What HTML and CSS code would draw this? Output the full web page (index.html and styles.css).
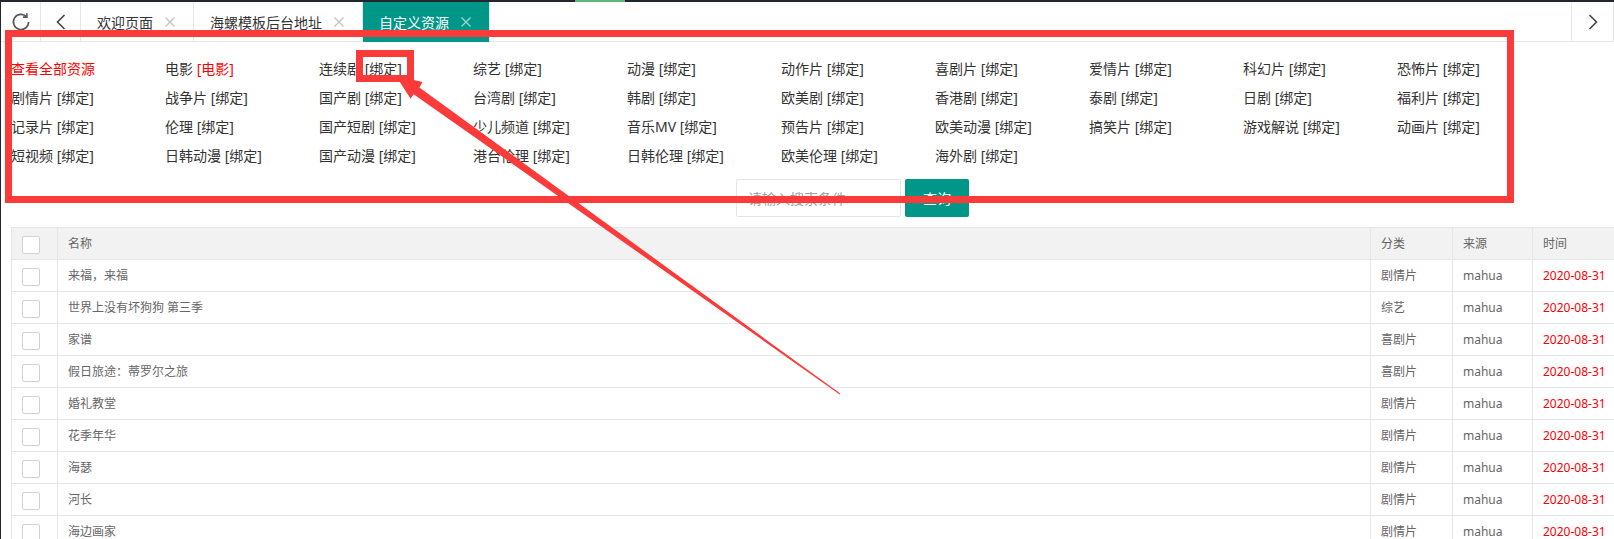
FILE: index.html
```html
<!DOCTYPE html>
<html lang="zh-CN">
<head>
<meta charset="utf-8">
<title>自定义资源</title>
<link rel="stylesheet" href="styles.css">
</head>
<body>
<div class="page">
  <div class="topbar"><span class="topbar-active"></span></div>
  <div class="tabs">
    <div class="tab-btn">
      <svg width="20" height="20" viewBox="0 0 20 20"><path d="M17.6 10 A7.6 7.6 0 1 1 15.4 4.6" fill="none" stroke="#555" stroke-width="1.6"/><path d="M15.9 1.2 V5.1 H12" fill="none" stroke="#555" stroke-width="1.6"/></svg>
    </div>
    <div class="tab-btn">
      <svg width="12" height="16" viewBox="0 0 12 16"><path d="M9.5 1 L2.5 8 L9.5 15" fill="none" stroke="#444" stroke-width="1.6"/></svg>
    </div>
    <div class="tab"><span>欢迎页面</span><svg class="x" width="10" height="10" viewBox="0 0 10 10"><path d="M0.5 0.5 L9.5 9.5 M9.5 0.5 L0.5 9.5" stroke="#c2c2c2" stroke-width="1.3"/></svg></div>
    <div class="tab"><span>海螺模板后台地址</span><svg class="x" width="10" height="10" viewBox="0 0 10 10"><path d="M0.5 0.5 L9.5 9.5 M9.5 0.5 L0.5 9.5" stroke="#c2c2c2" stroke-width="1.3"/></svg></div>
    <div class="tab tab-active"><span>自定义资源</span><svg class="x" width="10" height="10" viewBox="0 0 10 10"><path d="M0.5 0.5 L9.5 9.5 M9.5 0.5 L0.5 9.5" stroke="#9fd6d0" stroke-width="1.3"/></svg></div>
    <div class="tab-next">
      <svg width="12" height="16" viewBox="0 0 12 16"><path d="M2.5 1 L9.5 8 L2.5 15" fill="none" stroke="#444" stroke-width="1.6"/></svg>
    </div>
  </div>

  <div class="cats">
    <a class="cat red">查看全部资源</a>
    <a class="cat">电影 <span class="red">[电影]</span></a>
    <a class="cat">连续剧 [绑定]</a>
    <a class="cat">综艺 [绑定]</a>
    <a class="cat">动漫 [绑定]</a>
    <a class="cat">动作片 [绑定]</a>
    <a class="cat">喜剧片 [绑定]</a>
    <a class="cat">爱情片 [绑定]</a>
    <a class="cat">科幻片 [绑定]</a>
    <a class="cat">恐怖片 [绑定]</a>
    <a class="cat">剧情片 [绑定]</a>
    <a class="cat">战争片 [绑定]</a>
    <a class="cat">国产剧 [绑定]</a>
    <a class="cat">台湾剧 [绑定]</a>
    <a class="cat">韩剧 [绑定]</a>
    <a class="cat">欧美剧 [绑定]</a>
    <a class="cat">香港剧 [绑定]</a>
    <a class="cat">泰剧 [绑定]</a>
    <a class="cat">日剧 [绑定]</a>
    <a class="cat">福利片 [绑定]</a>
    <a class="cat">记录片 [绑定]</a>
    <a class="cat">伦理 [绑定]</a>
    <a class="cat">国产短剧 [绑定]</a>
    <a class="cat">少儿频道 [绑定]</a>
    <a class="cat">音乐MV [绑定]</a>
    <a class="cat">预告片 [绑定]</a>
    <a class="cat">欧美动漫 [绑定]</a>
    <a class="cat">搞笑片 [绑定]</a>
    <a class="cat">游戏解说 [绑定]</a>
    <a class="cat">动画片 [绑定]</a>
    <a class="cat">短视频 [绑定]</a>
    <a class="cat">日韩动漫 [绑定]</a>
    <a class="cat">国产动漫 [绑定]</a>
    <a class="cat">港台伦理 [绑定]</a>
    <a class="cat">日韩伦理 [绑定]</a>
    <a class="cat">欧美伦理 [绑定]</a>
    <a class="cat">海外剧 [绑定]</a>
  </div>

  <div class="search">
    <input class="search-input" type="text" placeholder="请输入搜索条件">
    <button class="search-btn">查询</button>
  </div>

  <table class="grid">
    <colgroup>
      <col class="c-check"><col class="c-name"><col class="c-type"><col class="c-src"><col class="c-time">
    </colgroup>
    <thead>
      <tr><th><span class="cb"></span></th><th>名称</th><th>分类</th><th>来源</th><th>时间</th></tr>
    </thead>
    <tbody>
      <tr><td><span class="cb"></span></td><td>来福，来福</td><td>剧情片</td><td>mahua</td><td class="date">2020-08-31</td></tr>
      <tr><td><span class="cb"></span></td><td>世界上没有坏狗狗 第三季</td><td>综艺</td><td>mahua</td><td class="date">2020-08-31</td></tr>
      <tr><td><span class="cb"></span></td><td>家谱</td><td>喜剧片</td><td>mahua</td><td class="date">2020-08-31</td></tr>
      <tr><td><span class="cb"></span></td><td>假日旅途：蒂罗尔之旅</td><td>喜剧片</td><td>mahua</td><td class="date">2020-08-31</td></tr>
      <tr><td><span class="cb"></span></td><td>婚礼教堂</td><td>剧情片</td><td>mahua</td><td class="date">2020-08-31</td></tr>
      <tr><td><span class="cb"></span></td><td>花季年华</td><td>剧情片</td><td>mahua</td><td class="date">2020-08-31</td></tr>
      <tr><td><span class="cb"></span></td><td>海瑟</td><td>剧情片</td><td>mahua</td><td class="date">2020-08-31</td></tr>
      <tr><td><span class="cb"></span></td><td>河长</td><td>剧情片</td><td>mahua</td><td class="date">2020-08-31</td></tr>
      <tr><td><span class="cb"></span></td><td>海边画家</td><td>剧情片</td><td>mahua</td><td class="date">2020-08-31</td></tr>
    </tbody>
  </table>

  <div class="annot-box"></div>
  <div class="annot-small"></div>
  <svg class="annot-arrow" width="1614" height="539" viewBox="0 0 1614 539">
    <polygon fill="#fb3a3a" points="396,76 422.5,82 419.4,87.4 840.3,393.6 839.7,394.4 413.6,94.2 410.6,98.8"/>
  </svg>
</div>
</body>
</html>
```

FILE: styles.css
```css
html, body {
  margin: 0;
  padding: 0;
  overflow: hidden;
  background: #fff;
}

body {
  font-family: "Noto Sans", "Noto Sans CJK SC", sans-serif;
  color: #333;
}

.page {
  position: relative;
  border-left: 1px solid #23262e;
  height: 539px;
  box-sizing: border-box;
}

.topbar {
  height: 2px;
  background: #23262e;
  display: flex;
}

.topbar-active {
  margin-left: 574px;
  width: 50px;
  background: #5fb878;
}

.tabs {
  display: flex;
  height: 39px;
  border-bottom: 1px solid #e6e6e6;
  font-size: 14px;
}

.tab-btn {
  width: 39px;
  border-right: 1px solid #e6e6e6;
  display: flex;
  align-items: center;
  justify-content: center;
}

.tab {
  display: flex;
  align-items: center;
  gap: 12px;
  padding: 0 18px 0 16px;
  border-right: 1px solid #e6e6e6;
  color: #333;
  white-space: nowrap;
}

.tab-active {
  background: #009688;
  color: #fff;
  height: 40px;
}

.tab .x {
  flex: none;
}

.tab-next {
  margin-left: auto;
  width: 41px;
  border-left: 1px solid #e6e6e6;
  border-right: 1px solid #e6e6e6;
  display: flex;
  align-items: center;
  justify-content: center;
}

.cats {
  display: grid;
  grid-template-columns: repeat(10, 154px);
  padding: 12px 0 0 10px;
  font-size: 14px;
  line-height: 29px;
}

.cat {
  color: #333;
  white-space: nowrap;
}

.red {
  color: #ff0000;
}

.search {
  display: flex;
  gap: 4px;
  margin: 9px 0 0 735px;
}

.search-input {
  width: 165px;
  height: 38px;
  box-sizing: border-box;
  border: 1px solid #e6e6e6;
  border-radius: 2px;
  padding: 0 0 0 11px;
  font-family: "Noto Sans", "Noto Sans CJK SC", sans-serif;
  font-size: 14px;
  color: #333;
  outline: none;
}

.search-input::placeholder {
  color: #a0a0a0;
}

.search-btn {
  width: 64px;
  height: 38px;
  border: none;
  border-radius: 2px;
  background: #009688;
  color: #fff;
  font-family: "Noto Sans", "Noto Sans CJK SC", sans-serif;
  font-size: 14px;
  padding: 0;
}

.grid {
  margin: 10px 0 0 10px;
  border-collapse: collapse;
  table-layout: fixed;
  width: 1660px;
  font-size: 12px;
  color: #666;
}

.c-check { width: 46px; }
.c-name { width: 1313px; }
.c-type { width: 82px; }
.c-src { width: 80px; }
.c-time { width: 139px; }

.grid th,
.grid td {
  border: 1px solid #e6e6e6;
  padding: 0 10px;
  height: 31px;
  line-height: 31px;
  text-align: left;
  font-weight: normal;
  white-space: nowrap;
  overflow: hidden;
}

.grid thead th {
  background: #f2f2f2;
}

.cb {
  display: inline-block;
  vertical-align: middle;
  width: 16px;
  height: 16px;
  border: 1px solid #d2d2d2;
  border-radius: 2px;
  background: #fff;
}

.grid td.date {
  color: #ff0000;
}

.annot-box {
  position: absolute;
  left: 4px;
  top: 30px;
  width: 1495px;
  height: 159px;
  border: 7px solid #fb3a3a;
  z-index: 5;
}

.annot-small {
  position: absolute;
  left: 355px;
  top: 50px;
  width: 44px;
  height: 18px;
  border: 7px solid #fb3a3a;
  z-index: 5;
}

.annot-arrow {
  position: absolute;
  left: -1px;
  top: 0;
  z-index: 6;
  pointer-events: none;
}
```
